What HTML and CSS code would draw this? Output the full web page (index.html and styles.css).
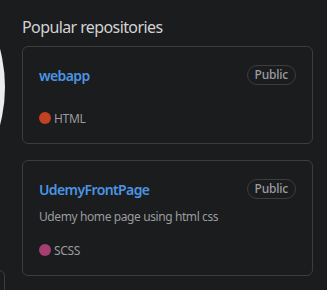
FILE: index.html
```html
<html>
<head>
<link rel="stylesheet" href="styles.css">
</head>
<body>
<div class="layout">
  <div class="sidebar">
    <div class="avatar"></div>
    <div class="side-box"></div>
  </div>

  <div class="main">
    <h2 class="section-title">Popular repositories</h2>

    <div class="repo-card">
      <div class="repo-head">
        <a class="repo-name" href="#">webapp</a>
        <span class="badge">Public</span>
      </div>
      <p class="repo-desc"></p>
      <p class="repo-meta"><span class="lang-dot html"></span>HTML</p>
    </div>

    <div class="repo-card">
      <div class="repo-head">
        <a class="repo-name" href="#">UdemyFrontPage</a>
        <span class="badge">Public</span>
      </div>
      <p class="repo-desc">Udemy home page using html css</p>
      <p class="repo-meta"><span class="lang-dot scss"></span>SCSS</p>
    </div>
  </div>
</div>
</body>
</html>
```

FILE: styles.css
```css
body
{
  margin:0;
  padding:0;
  background-color:#1b1c1e;
  font-family:"Noto Sans","Open Sans",sans-serif;
  overflow:hidden;
}
.layout
{
  display:flex;
  align-items:flex-start;
}
.sidebar
{
  flex:none;
  width:296px;
  margin-left:-291px;
  margin-top:-61px;
}
.avatar
{
  width:296px;
  height:296px;
  border-radius:50%;
  background-color:#ececec;
}
.side-box
{
  margin-top:35px;
  height:80px;
  border:1px solid #3b3d40;
  border-radius:6px;
}
.main
{
  flex:none;
  width:291px;
  margin-left:17px;
}
.section-title
{
  margin:15px 0 7px 0;
  font-size:16px;
  line-height:24px;
  font-weight:400;
  letter-spacing:-0.6px;
  color:#d2d3d4;
}
.repo-card
{
  display:flex;
  flex-direction:column;
  padding:16px;
  margin-bottom:16px;
  border:1px solid #3b3d40;
  border-radius:6px;
}
.repo-head
{
  display:flex;
  align-items:center;
  justify-content:space-between;
  height:24px;
}
.repo-name
{
  font-size:14px;
  font-weight:600;
  letter-spacing:-0.6px;
  color:#4a95e2;
  text-decoration:none;
}
.badge
{
  padding:0 7px;
  height:18px;
  line-height:18px;
  font-size:12px;
  font-weight:500;
  letter-spacing:-0.2px;
  color:#9c9da0;
  border:1px solid #3b3d40;
  border-radius:10px;
}
.repo-desc
{
  margin:7px 0 15px 0;
  font-size:12px;
  line-height:18px;
  letter-spacing:-0.4px;
  color:#9a9b9e;
}
.repo-desc:empty
{
  height:0;
}
.repo-meta
{
  display:flex;
  align-items:center;
  margin:0;
  height:18px;
  font-size:12px;
  letter-spacing:-0.3px;
  color:#9a9b9e;
}
.lang-dot
{
  width:12px;
  height:12px;
  margin-right:3px;
  border-radius:50%;
}
.html
{
  background-color:#c14120;
}
.scss
{
  background-color:#a63f6f;
}
```
